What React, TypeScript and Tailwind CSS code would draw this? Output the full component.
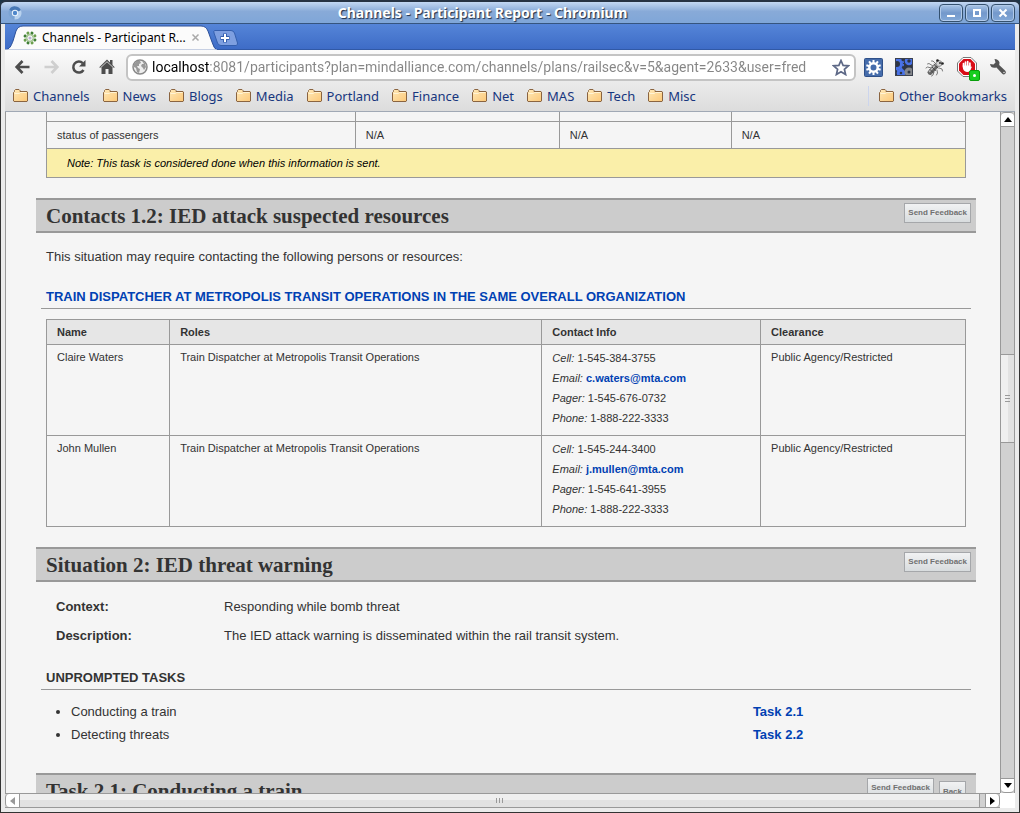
import React from "react";

const ui = "font-['Noto_Sans','Open_Sans',sans-serif]";

function Folder() {
  return (
    <svg width="16" height="14" viewBox="0 0 16 14" className="shrink-0" aria-hidden="true">
      <defs>
        <linearGradient id="folder" x1="0" y1="0" x2="1" y2="1">
          <stop offset="0" stopColor="#ffe9b8" />
          <stop offset="1" stopColor="#fcc878" />
        </linearGradient>
      </defs>
      <path d="M.5 12V3.500L1.500 2.500V1.500L2.500 .5H6L7 1.500V2.500H14L14.500 3V12L14 12.500H1Z" fill="url(#folder)" stroke="#8a6440" />
      <path d="M1.500 4.500H6.500L7.500 3.500H13.500" fill="none" stroke="#fff3d4" />
    </svg>
  );
}

function Chromium() {
  return (
    <svg width="14" height="14" viewBox="0 0 14 14" aria-hidden="true">
      <circle cx="7" cy="7" r="6.500" fill="#7ba3d3" />
      <path d="M7 7L1.300 3.700A6.500 6.500 0 0 1 12.900 4.200Z" fill="#4777b5" />
      <path d="M7 7L12.900 4.200A6.500 6.500 0 0 1 6.500 13.500Z" fill="#b9d2ee" />
      <circle cx="7" cy="7" r="3.200" fill="#edf5fd" />
      <circle cx="7" cy="7" r="2.200" fill="#5088cb" />
    </svg>
  );
}

function Favicon() {
  const angles = [0, 45, 90, 135, 180, 225, 270, 315];
  return (
    <svg width="14" height="14" viewBox="0 0 14 14" className="shrink-0" aria-hidden="true">
      {angles.map((a, i) => (
        <g key={a} transform={`rotate(${a + 22} 7 7)`}>
          <circle cx="7" cy="1.700" r="1.500" fill={i % 2 ? "#6b9f4d" : "#3f7f35"} />
          <path d="M5.700 4.200Q7 3 8.300 4.200" fill="none" stroke="#8db779" />
        </g>
      ))}
      <circle cx="7" cy="7" r="1.600" fill="#b9b1d2" />
    </svg>
  );
}

function WindowButton({ label, children }: { label: string; children: React.ReactNode }) {
  return (
    <button
      type="button"
      aria-label={label}
      className="flex h-[18px] w-6 items-center justify-center rounded-sm border border-[#34516f] bg-linear-to-b from-[#a9c5e7] via-[#7398cb] via-50% to-[#83a9d8] shadow-[inset_0_0_0_1px_#b1caea]"
    >
      <svg width="12" height="10" viewBox="0 0 12 10" fill="none" stroke="#fff" strokeWidth="2">
        {children}
      </svg>
    </button>
  );
}

function TitleBar() {
  return (
    <header className="grid h-6 grid-cols-[24px_1fr_82px] items-center rounded-t-md border-x border-t-2 border-b border-[#263344] border-b-[#36557e] bg-linear-to-b from-[#c3d8f3] via-[#88aad8] via-45% to-[#7fa6d8] pr-1 pl-[7px]">
      <Chromium />
      <h1 className={`${ui} text-center text-[14px] leading-5 font-bold text-white [text-shadow:1px_1px_1px_#1d2c45]`}>
        Channels - Participant Report - Chromium
      </h1>
      <div className="flex justify-end gap-0.5">
        <WindowButton label="Minimize"><path d="M2 8H10" /></WindowButton>
        <WindowButton label="Maximize"><path d="M3 2V8H9V2Z" /></WindowButton>
        <WindowButton label="Close"><path d="M2.500 1.500L9.500 8.500M9.500 1.500L2.500 8.500" /></WindowButton>
      </div>
    </header>
  );
}

function TabStrip() {
  return (
    <nav className="flex h-[26px] items-end bg-linear-to-b from-[#5585d8] to-[#3d6bc6] shadow-[inset_0_-1px_#3159a6]">
      <div className="relative flex h-[25px] w-[212px] items-center">
        <svg width="212" height="25" viewBox="0 0 212 25" className="absolute inset-0" aria-hidden="true">
          <path d="M0 25C5 24 6 21 8 16L11 6Q13 1 18 1H196Q201 1 203 6L207 17Q209 24 212 25Z" fill="#fbfbfb" stroke="#2c509a" />
          <path d="M0 25H212" stroke="#fbfbfb" />
        </svg>
        <a href="#top" className={`${ui} relative flex items-center gap-[5px] pl-[18px] text-[12px] leading-4 text-black`}>
          <Favicon />
          <span className="w-[146px] truncate">Channels - Participant R...</span>
        </a>
        <button type="button" aria-label="Close tab" className="relative ml-[3px]">
          <svg width="9" height="9" viewBox="0 0 9 9" stroke="#a9a9a9" strokeWidth="1.500"><path d="M1.500 1.500L7.500 7.500M7.500 1.500L1.500 7.500" /></svg>
        </button>
      </div>
      <button type="button" aria-label="New tab" className="mb-1 -ml-1">
        <svg width="26" height="16" viewBox="0 0 26 16">
          <path d="M1.500 .5H18Q20.500 .5 21.500 3L24.500 13Q25 15 23 15.500H8Q5.500 15.500 4.500 13L1 3Q.5 .5 1.500 .5Z" fill="#7e9fe0" stroke="#345fae" />
          <path d="M12 3.500V12.500M7.500 8H16.500" stroke="#345fae" strokeWidth="4" />
          <path d="M12 4V12M8 8H16" stroke="#fff" strokeWidth="2" />
        </svg>
      </button>
    </nav>
  );
}

function IconButton({ label, children }: { label: string; children: React.ReactNode }) {
  return (
    <button type="button" aria-label={label} className="shrink-0">
      {children}
    </button>
  );
}

const teeth = [0, 36, 72, 108, 144];

function Toolbar() {
  return (
    <div className="flex h-[34px] items-center pr-2 pl-[9px]">
      <div className="flex gap-2.5">
        <IconButton label="Back">
          <svg width="18" height="16" viewBox="0 0 18 16" fill="none" stroke="#4d4d4d" strokeWidth="2.700"><path d="M15.500 8H3M8.500 2L2.700 8L8.500 14" /></svg>
        </IconButton>
        <IconButton label="Forward">
          <svg width="18" height="16" viewBox="0 0 18 16" fill="none" stroke="#cfcfcf" strokeWidth="2.700"><path d="M2.500 8H15M9.500 2L15.300 8L9.500 14" /></svg>
        </IconButton>
        <IconButton label="Reload">
          <svg width="18" height="16" viewBox="0 0 18 16"><path d="M13.500 11A5.500 5.500 0 1 1 12.700 4.200" fill="none" stroke="#4d4d4d" strokeWidth="2.500" /><path d="M15.500 1V7.500H9Z" fill="#4d4d4d" /></svg>
        </IconButton>
        <IconButton label="Home">
          <svg width="18" height="16" viewBox="0 0 18 16" fill="#4d4d4d"><path d="M9 .5L12 3.500V1H14.500V6L17 8.500H14.500V15H10.500V10H7.500V15H3.500V8.500H1Z" /><path d="M3 8.300L9 2.700L15 8.300" fill="none" stroke="#eee" strokeWidth=".8" /></svg>
        </IconButton>
      </div>
      <div className="ml-2.5 flex h-[27px] min-w-0 flex-1 items-center gap-1 rounded-md border-2 border-[#c4c4c4] bg-white px-1">
        <label htmlFor="address" aria-label="Address" className="shrink-0">
          <svg width="16" height="16" viewBox="0 0 16 16" aria-hidden="true">
            <circle cx="8" cy="8" r="7" fill="#eee" stroke="#8a8a8a" strokeWidth="1.500" />
            <path d="M2 5L5 2L8 2L9 4L7 5L7 7L5 7L6 9L8 10L7 14L5 13L4 9L2 8ZM10 2L13 4L14 8L12 11L11 9L9 7L10 5L12 5Z" fill="#999" />
          </svg>
        </label>
        <input
          id="address"
          aria-label="Address"
          defaultValue="localhost:8081/participants?plan=mindalliance.com/channels/plans/railsec&v=5&agent=2633&user=fred"
          className="h-5 min-w-0 flex-1 bg-linear-to-r from-black from-[57px] to-[#858585] to-[57px] bg-clip-text p-0 font-['Roboto','Noto_Sans',sans-serif] text-[14px] leading-5 text-transparent outline-none"
        />
        <IconButton label="Bookmark this page">
          <svg width="18" height="17" viewBox="0 0 18 17" fill="#fff" stroke="#5d6886" strokeWidth="1.700"><path d="M9 1.500L11.100 6.400L16.400 6.800L12.400 10.300L13.600 15.500L9 12.700L4.400 15.500L5.600 10.300L1.600 6.800L6.900 6.400Z" /></svg>
        </IconButton>
      </div>
      <div className="ml-2 flex items-center gap-3">
        <IconButton label="Settings extension">
          <svg width="19" height="19" viewBox="0 0 19 19">
            <rect x=".5" y=".5" width="18" height="18" rx="1" fill="#456cab" stroke="#2f5088" />
            {teeth.map((a) => <path key={a} d="M9.500 2V17" stroke="#fff" strokeWidth="2" transform={`rotate(${a} 9.500 9.500)`} />)}
            <circle cx="9.500" cy="9.500" r="4.200" fill="#456cab" stroke="#fff" strokeWidth="2.400" />
          </svg>
        </IconButton>
        <IconButton label="Gears extension">
          <svg width="18" height="18" viewBox="0 0 18 18">
            <rect width="18" height="18" fill="#2e3544" />
            <g fill="none">
              <g stroke="#4a73e8">
                <circle cx="2" cy="6" r="4.500" strokeWidth="3" /><circle cx="2" cy="6" r="6.300" strokeWidth="1.500" strokeDasharray="2 1.960" />
                <circle cx="14" cy="3" r="3" strokeWidth="2.500" />
                <circle cx="6" cy="15" r="2.800" strokeWidth="3" />
              </g>
              <circle cx="14" cy="14" r="3" stroke="#85878c" strokeWidth="3" />
            </g>
            <rect x=".5" y=".5" width="17" height="17" fill="none" stroke="#3b414f" />
          </svg>
        </IconButton>
        <IconButton label="Bug extension">
          <svg width="20" height="19" viewBox="0 0 20 19" fill="none" stroke="#6d6d6d" strokeWidth=".9" strokeLinecap="round">
            <path d="M11 6L8 3L6.500 3M8 8L4 5.500L2.500 6M6.500 10L2.500 9L1 10M6 13L3 14M9 14L8 17L6.500 18M12 12L12.500 15L11.500 17M14 10L17 11L17.500 13" />
            <path d="M11.500 7.500L5 14.500" stroke="#666" strokeWidth="4.800" />
            <path d="M10.500 7L4.500 13.500" stroke="#bcbcbc" strokeWidth="1.500" />
            <path d="M9 6.500L13 10M7 9L10.500 12.500M5 11.500L8 14.500" stroke="#444" />
            <circle cx="14" cy="5.500" r="3" fill="#d5d5d5" stroke="#888" />
            <circle cx="12.500" cy="2.500" r="1.300" fill="#222" stroke="none" /><circle cx="17.500" cy="5.500" r="1.300" fill="#222" stroke="none" /><circle cx="15" cy="5" r=".9" fill="#222" stroke="none" />
          </svg>
        </IconButton>
        <button type="button" aria-label="AdBlock" className="relative shrink-0">
          <svg width="20" height="20" viewBox="0 0 20 20">
            <path d="M6 .5H14L19.500 6V14L14 19.500H6L.5 14V6Z" fill="#fff" stroke="#777" />
            <path d="M6.500 2H13.500L18 6.500V13.500L13.500 18H6.500L2 13.500V6.500Z" fill="#d90b16" />
            <path d="M6.500 9V6.500M8.500 9V5M10.700 9V4.500M12.900 9V6" stroke="#fff" strokeWidth="1.700" strokeLinecap="round" />
            <path d="M5.700 8.500H13.700V10L15 9.500L13.300 13.500Q12 15 10 15Q6 14.500 5.700 10Z" fill="#fff" />
          </svg>
          <span className="absolute -right-[3px] -bottom-1 flex size-[11px] items-center justify-center rounded-[2px] border border-[#079e0a] bg-[#16cd20]">
            <span className="size-[3px] rounded-full bg-white" />
          </span>
        </button>
        <IconButton label="Customize">
          <svg width="18" height="18" viewBox="0 0 18 18" fill="#555">
            <path d="M1 6L4.500 6.500L6.500 4.500L5.500 1Q9.500 1 10.500 4.500L10.200 7L16.500 13Q17.500 15 16 16Q14.500 17 13 15.500L7.500 9.500Q2 11 1 6Z" />
            <circle cx="15" cy="14.500" r=".8" fill="#ddd" />
          </svg>
        </IconButton>
      </div>
    </div>
  );
}

const bookmarks = ["Channels", "News", "Blogs", "Media", "Portland", "Finance", "Net", "MAS", "Tech", "Misc"];

function BookmarkBar() {
  return (
    <div className={`${ui} flex h-[27px] items-center gap-[13px] px-2 pb-1 text-[13px] leading-5 text-[#17367e]`}>
      {bookmarks.map((name) => (
        <a key={name} href="#top" className="flex items-center gap-1">
          <Folder />
          {name}
        </a>
      ))}
      <a href="#top" className="ml-auto flex items-center gap-1 border-l border-[#ccd5ed] pl-2.5 whitespace-nowrap">
        <Folder />
        Other Bookmarks
      </a>
    </div>
  );
}

function SmallButton({ children }: { children: string }) {
  return (
    <button type="button" className="h-5 border border-[#a5a7aa] bg-linear-to-b from-[#f1f2f3] to-[#d8dcde] px-[3px] pt-px text-[8px] leading-3 font-bold text-[#707070]">
      {children}
    </button>
  );
}

function SectionHeader({ title, back }: { title: string; back?: boolean }) {
  return (
    <div className="flex h-[35px] items-start justify-between border-y-2 border-[#999] bg-[#ccc] pr-[5px] pl-2.5">
      <h2 className="font-[Georgia,'Liberation_Serif',serif] text-[21px] leading-8 font-bold text-[#333]">{title}</h2>
      <div className="flex items-start gap-[5px] pt-[3px]">
        <SmallButton>Send Feedback</SmallButton>
        {back && <div className="mr-[5px] pt-0.5"><SmallButton>Back</SmallButton></div>}
      </div>
    </div>
  );
}

const contacts = [
  { name: "Claire Waters", cell: "1-545-384-3755", email: "c.waters@mta.com", pager: "1-545-676-0732" },
  { name: "John Mullen", cell: "1-545-244-3400", email: "j.mullen@mta.com", pager: "1-545-641-3955" },
];

const cell = "border border-[#999] px-2.5 py-0 text-left align-top";

function Report() {
  return (
    <main id="top" className="min-h-0 min-w-0 flex-1 overflow-hidden border-l border-[#999] bg-[#f5f5f5] pr-6 pl-[30px] font-['Liberation_Sans',Arial,sans-serif] text-[13px] leading-5 text-[#333]">
      <div className="px-2.5">
        <table className="w-full table-fixed border-collapse text-[11px] leading-[26px]">
          <colgroup><col className="w-[33.6%]" /><col className="w-[22.2%]" /><col className="w-[18.7%]" /><col className="w-[25.5%]" /></colgroup>
          <tbody>
            <tr className="h-[9px]">{[0, 1, 2, 3].map((i) => <td key={i} className="border-x border-[#999]" />)}</tr>
            <tr>
              <td className={cell}>status of passengers</td>
              <td className={cell}>N/A</td>
              <td className={cell}>N/A</td>
              <td className={cell}>N/A</td>
            </tr>
            <tr><td colSpan={4} className="border border-[#999] bg-[#faefa9] px-5 leading-7 text-black italic">Note: This task is considered done when this information is sent.</td></tr>
          </tbody>
        </table>
      </div>

      <section className="mt-5">
        <SectionHeader title="Contacts 1.2: IED attack suspected resources" />
        <p className="mt-3.5 px-2.5">This situation may require contacting the following persons or resources:</p>
        <h3 className="mx-[5px] mt-5 border-b border-[#999] px-[5px] pb-px font-bold text-[#0041b3] uppercase">
          Train Dispatcher at Metropolis Transit Operations in the same overall organization
        </h3>
        <div className="mt-2.5 px-2.5">
          <table className="w-full table-fixed border-collapse text-[11px] leading-6">
            <colgroup><col className="w-[13.4%]" /><col className="w-[40.5%]" /><col className="w-[23.8%]" /><col className="w-[22.3%]" /></colgroup>
            <thead className="bg-[#e6e6e6]">
              <tr>{["Name", "Roles", "Contact Info", "Clearance"].map((h) => <th key={h} scope="col" className={cell}>{h}</th>)}</tr>
            </thead>
            <tbody>
              {contacts.map((c) => (
                <tr key={c.name}>
                  <td className={cell}>{c.name}</td>
                  <td className={cell}>Train Dispatcher at Metropolis Transit Operations</td>
                  <td className={cell}>
                    <ul className="pt-[3px] pb-[7px] leading-5">
                      <li><i>Cell:</i> {c.cell}</li>
                      <li><i>Email:</i> <a href={`mailto:${c.email}`} className="font-bold text-[#0041b3]">{c.email}</a></li>
                      <li><i>Pager:</i> {c.pager}</li>
                      <li><i>Phone:</i> 1-888-222-3333</li>
                    </ul>
                  </td>
                  <td className={cell}>Public Agency/Restricted</td>
                </tr>
              ))}
            </tbody>
          </table>
        </div>
      </section>

      <section className="mt-5">
        <SectionHeader title="Situation 2: IED threat warning" />
        <dl className="mt-[15px] grid grid-cols-[168px_1fr] gap-y-[9px] px-5">
          <dt className="font-bold">Context:</dt>
          <dd>Responding while bomb threat</dd>
          <dt className="font-bold">Description:</dt>
          <dd>The IED attack warning is disseminated within the rail transit system.</dd>
        </dl>
        <h3 className="mx-[5px] mt-[22px] border-b border-[#999] px-[5px] pb-px font-bold uppercase">Unprompted tasks</h3>
        <ul className="mt-2.5 list-disc pr-2.5 pl-[35px] leading-[23px]">
          <li><div className="grid grid-cols-[16fr_5fr]"><span>Conducting a train</span><a href="#task21" className="font-bold text-[#0041b3]">Task 2.1</a></div></li>
          <li><div className="grid grid-cols-[16fr_5fr]"><span>Detecting threats</span><a href="#task22" className="font-bold text-[#0041b3]">Task 2.2</a></div></li>
        </ul>
      </section>

      <section id="task21" className="mt-[27px]">
        <SectionHeader title="Task 2.1: Conducting a train" back />
      </section>
    </main>
  );
}

function VerticalScroll() {
  return (
    <div className="flex w-[15px] shrink-0 flex-col border-x border-[#999] bg-[#d1d1d1]">
      <button type="button" aria-label="Scroll up" className="flex h-[15px] items-center justify-center rounded-t border-y border-[#999] bg-white">
        <svg width="8" height="5" viewBox="0 0 8 5"><path d="M4 0L8 5H0Z" /></svg>
      </button>
      <div className="grow-[228] basis-0" />
      <div className="flex grow-[87] basis-0 flex-col items-center justify-center gap-0.5 border-y border-[#999] bg-linear-to-r from-[#efefef] from-50% to-[#e2e2e2] to-50%">
        {[0, 1, 2].map((i) => <span key={i} className="h-px w-[5px] bg-[#999]" />)}
      </div>
      <div className="grow-[336] basis-0" />
      <button type="button" aria-label="Scroll down" className="flex h-[15px] items-center justify-center rounded-b border-y border-[#999] bg-white">
        <svg width="8" height="5" viewBox="0 0 8 5"><path d="M4 5L0 0H8Z" /></svg>
      </button>
    </div>
  );
}

function HorizontalScroll() {
  return (
    <div className="flex h-[15px] shrink-0 bg-white pr-[15px]">
      <div className="flex flex-1 border-y border-[#999] bg-[#d1d1d1]">
        <button type="button" aria-label="Scroll left" className="flex w-[15px] items-center justify-center rounded-l border-x border-[#999] bg-white">
          <svg width="5" height="8" viewBox="0 0 5 8"><path d="M0 4L5 0V8Z" fill="#999" /></svg>
        </button>
        <div className="flex flex-1 items-center justify-center gap-0.5 border-r border-[#999] bg-linear-to-b from-[#efefef] from-50% to-[#e2e2e2] to-50%">
          {[0, 1, 2].map((i) => <span key={i} className="h-[5px] w-px bg-[#999]" />)}
        </div>
        <div className="w-[5px]" />
        <button type="button" aria-label="Scroll right" className="flex w-[15px] items-center justify-center rounded-r border-x border-[#999] bg-white">
          <svg width="5" height="8" viewBox="0 0 5 8"><path d="M5 4L0 0V8Z" /></svg>
        </button>
      </div>
    </div>
  );
}

export default function App() {
  return (
    <div className="flex h-screen flex-col bg-[#1c3447]">
      <TitleBar />
      <div className="flex min-h-0 flex-1 flex-col border-x border-b border-[#333] bg-[#ebebeb] px-1 pb-1">
        <TabStrip />
        <div className="border-b border-[#a1a9b5] bg-linear-to-b from-[#fbfbfb] to-[#dcdcdc]">
          <Toolbar />
          <BookmarkBar />
        </div>
        <div className="flex min-h-0 flex-1">
          <Report />
          <VerticalScroll />
        </div>
        <HorizontalScroll />
      </div>
    </div>
  );
}
